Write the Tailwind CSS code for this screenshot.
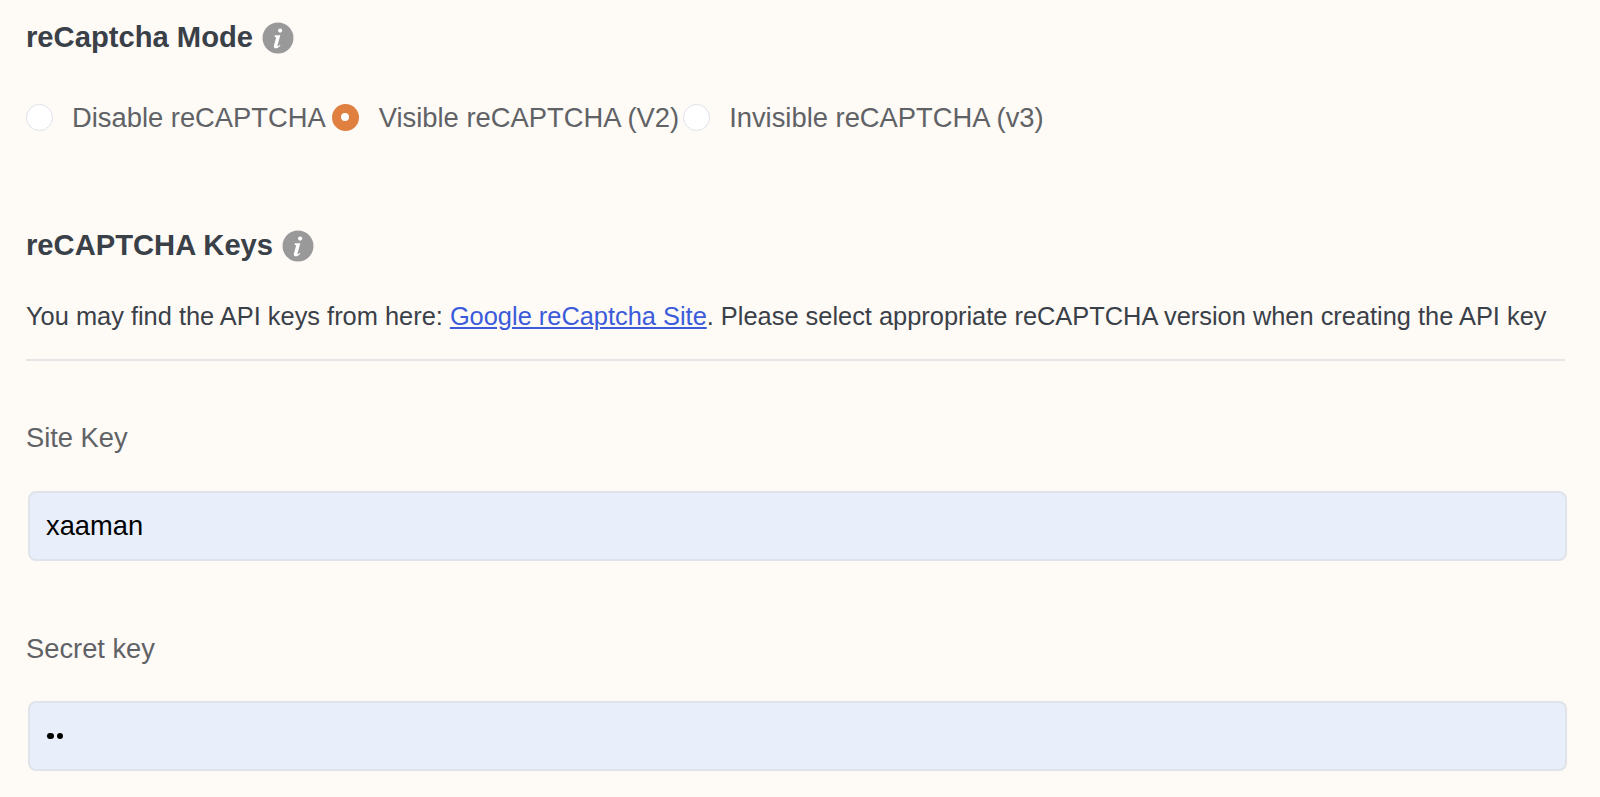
<!DOCTYPE html>
<html><head><meta charset="utf-8"><script src="https://cdn.jsdelivr.net/npm/@tailwindcss/browser@4"></script></head>
<body class="bg-[#fefaf6] h-[797px] overflow-hidden font-['Liberation_Sans',Arial,sans-serif]">
<div class="pl-[26px] pr-[33px] pt-[21px]">
  <h2 class="flex items-center gap-[9px] h-[34px] text-[29.2px] font-bold text-[#3a4048]">reCaptcha Mode
    <svg width="32" height="32" viewBox="0 0 30 30"><circle cx="15" cy="15" r="14.500" fill="#999"/><path d="M17 6a2 2 0 1 0 .01 0zM12 12.500h5.200l-2.700 9.500c-.2.700.3.900.9.500l1.400-1.100.5.600c-1.400 1.700-2.900 2.700-4.300 2.700-1.700 0-2.200-1.200-1.800-2.700l1.900-6.900c.2-.8-.3-1-1.300-1z" fill="#fff"/></svg>
  </h2>
  <div class="flex items-center mt-[50px] h-[24px] text-[27.35px] text-[#606266]">
    <label class="flex items-center gap-[19px]"><span class="w-[27px] h-[27px] rounded-full bg-white border-[1.5px] border-[#dfe2ea]"></span>Disable reCAPTCHA</label>
    <label class="flex items-center gap-[20px] ml-[6px]"><span class="w-[27px] h-[27px] rounded-full bg-[#e08040] flex items-center justify-center"><span class="w-[8px] h-[8px] rounded-full bg-white"></span></span>Visible reCAPTCHA (V2)</label>
    <label class="flex items-center gap-[19px] ml-[4px]"><span class="w-[27px] h-[27px] rounded-full bg-white border-[1.5px] border-[#dfe2ea]"></span>Invisible reCAPTCHA (v3)</label>
  </div>
  <h2 class="flex items-center gap-[9px] h-[34px] mt-[100px] text-[29.2px] font-bold text-[#3a4048]">reCAPTCHA Keys
    <svg width="32" height="32" viewBox="0 0 30 30"><circle cx="15" cy="15" r="14.500" fill="#999"/><path d="M17 6a2 2 0 1 0 .01 0zM12 12.500h5.200l-2.700 9.500c-.2.700.3.900.9.500l1.400-1.100.5.600c-1.400 1.700-2.900 2.700-4.300 2.700-1.700 0-2.200-1.200-1.800-2.700l1.900-6.900c.2-.8-.3-1-1.300-1z" fill="#fff"/></svg>
  </h2>
  <p class="mt-[38px] text-[25.4px] leading-[30px] text-[#3a4048] whitespace-nowrap">You may find the API keys from here: <a class="text-[#3b5bdb] underline">Google reCaptcha Site</a>. Please select appropriate reCAPTCHA version when creating the API key</p>
  <div class="mt-[28px] mr-[2px] h-[2px] bg-[#e4e6e8]"></div>
  <label class="block mt-[60px] text-[27.3px] leading-[34px] text-[#606266]">Site Key</label>
  <div class="ml-[2px] mt-[36px] h-[70px] rounded-[8px] bg-[#e9eefb] border-2 border-[#e0e3ea] pl-[16px] flex items-center text-[27.3px] text-black">xaaman</div>
  <label class="block mt-[71px] text-[27.3px] leading-[34px] text-[#606266]">Secret key</label>
  <div class="ml-[2px] mt-[35px] h-[70px] rounded-[8px] bg-[#e9eefb] border-2 border-[#e0e3ea] pl-[17px] flex items-center gap-[3px]"><span class="w-[6.5px] h-[6.5px] rounded-full bg-black"></span><span class="w-[6.5px] h-[6.5px] rounded-full bg-black"></span></div>
</div>
</body></html>
